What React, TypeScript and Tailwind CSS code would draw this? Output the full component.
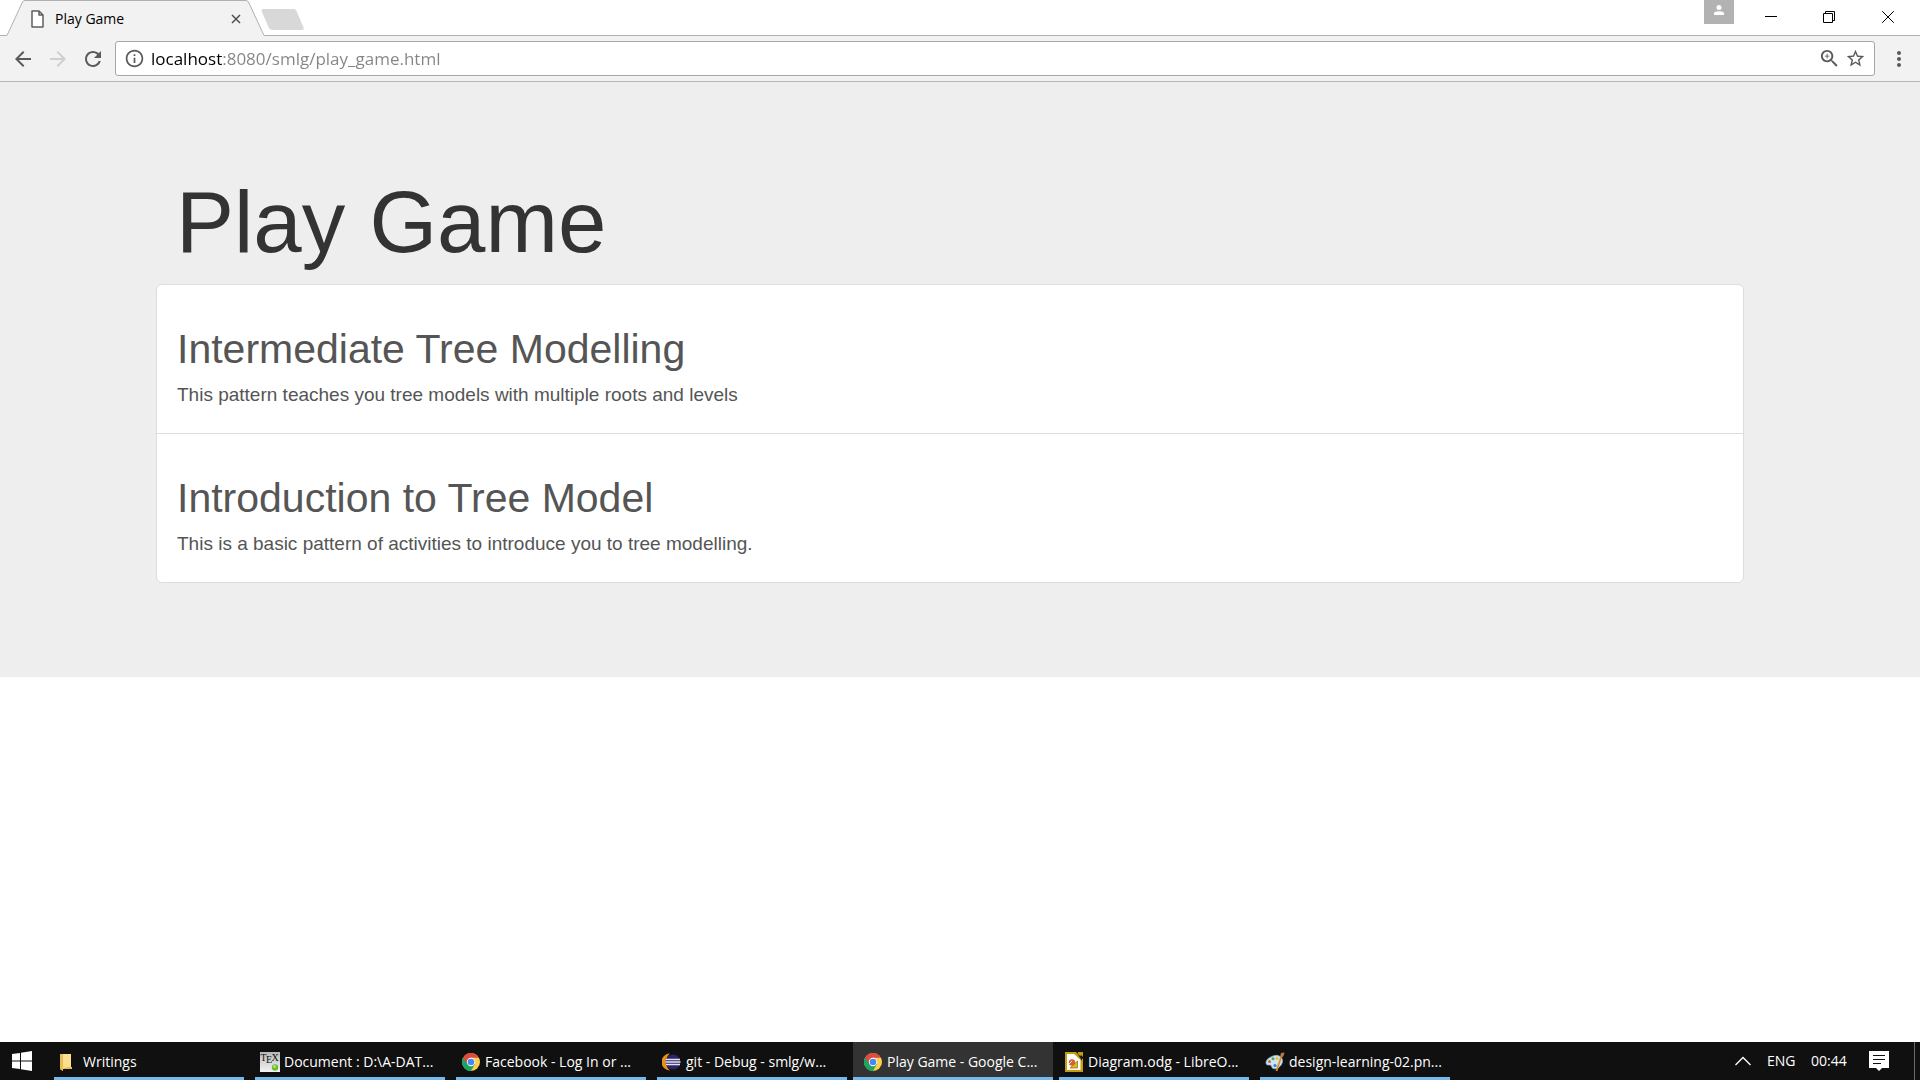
import React from "react";

type IconProps = { d: string; className?: string };

function Glyph({ d, className = "size-[21px]" }: IconProps) {
  return (
    <svg viewBox="0 0 24 24" fill="currentColor" aria-hidden="true" className={`shrink-0 ${className}`}>
      <path d={d} />
    </svg>
  );
}

const ARROW_BACK = "M20 11H7.83l5.59-5.59L12 4l-8 8 8 8 1.41-1.41L7.83 13H20v-2z";
const ARROW_FORWARD = "M4 11h12.17l-5.59-5.59L12 4l8 8-8 8-1.41-1.41L16.17 13H4v-2z";
const RELOAD =
  "M17.65 6.35C16.2 4.9 14.21 4 12 4c-4.42 0-7.99 3.58-7.99 8s3.57 8 7.99 8c3.73 0 6.84-2.55 7.73-6h-2.08c-.82 2.33-3.04 4-5.65 4-3.31 0-6-2.69-6-6s2.69-6 6-6c1.66 0 3.14.69 4.22 1.78L13 11h7V4l-2.35 2.35z";
const INFO =
  "M11 17h2v-6h-2v6zm1-15C6.48 2 2 6.48 2 12s4.48 10 10 10 10-4.48 10-10S17.52 2 12 2zm0 18c-4.41 0-8-3.59-8-8s3.59-8 8-8 8 3.59 8 8-3.59 8-8 8zM11 9h2V7h-2v2z";
const STAR =
  "M22 9.24l-7.19-.62L12 2 9.19 8.63 2 9.24l5.46 4.73L5.82 21 12 17.27 18.18 21l-1.63-7.03L22 9.24zM12 15.4l-3.76 2.27 1-4.28-3.32-2.88 4.38-.38L12 6.1l1.71 4.04 4.38.38-3.32 2.88 1 4.28L12 15.4z";
const ZOOM_IN =
  "M15.5 14h-.79l-.28-.27C15.41 12.59 16 11.11 16 9.5 16 5.91 13.09 3 9.5 3S3 5.91 3 9.5 5.91 16 9.5 16c1.61 0 3.09-.59 4.23-1.57l.27.28v.79l5 4.99L20.49 19l-4.99-5zm-6 0C7.01 14 5 11.99 5 9.5S7.01 5 9.5 5 14 7.01 14 9.5 11.99 14 9.5 14zm2.500-4h-2v2H9v-2H7V9h2V7h1v2h2v1z";
const MORE =
  "M12 8c1.1 0 2-.9 2-2s-.9-2-2-2-2 .9-2 2 .9 2 2 2zm0 2c-1.1 0-2 .9-2 2s.9 2 2 2 2-.9 2-2-.9-2-2-2zm0 6c-1.1 0-2 .9-2 2s.9 2 2 2 2-.9 2-2-.9-2-2-2z";

function TabStrip() {
  return (
    <header className="flex h-9 items-start bg-white">
      <div className="relative h-9 w-[271px] shrink-0">
        <svg viewBox="0 0 271 36" className="absolute inset-0 size-full" aria-hidden="true">
          <path d="M0 35.5H7L22 3Q23 .5 25 .5H246Q248 .5 249 3L264 35.5H271" fill="#f2f2f2" stroke="#b0b0b0" />
          <path d="M8 35.5H263" stroke="#f2f2f2" />
        </svg>
        <div className="relative flex h-[38px] items-center pr-[25px] pl-[31px]">
          <svg viewBox="0 0 13 18" className="h-[18px] w-[13px] shrink-0" fill="#fff" stroke="#5f5f5f" strokeWidth="1.5" strokeLinejoin="round" aria-hidden="true">
            <path d="M1 1H8L12 5V17H1ZM8 1V5H12" />
          </svg>
          <span className="ml-[11px] flex-1 text-sm text-black">Play Game</span>
          <button type="button" aria-label="Close tab" className="flex size-5 items-center justify-center">
            <svg viewBox="0 0 10 10" className="size-[10px]" stroke="#4f4f4f" strokeWidth="1.5" aria-hidden="true">
              <path d="M1 1 9 9M9 1 1 9" />
            </svg>
          </button>
        </div>
      </div>
      <div className="flex h-9 flex-1 items-start justify-between border-b border-[#b0b0b0]">
        <button type="button" aria-label="New tab" className="-ml-[10px] pt-[9px]">
          <svg viewBox="0 0 43 21" className="h-[21px] w-[43px]" aria-hidden="true">
            <path d="M2 0H33Q34.500 0 35.500 2L42.500 18.500Q43 21 41 21H11Q9 21 8 19L.5 2Q0 0 2 0Z" fill="#d8d8d8" />
          </svg>
        </button>
        <div className="flex items-start">
          <button type="button" aria-label="Profile" className="mr-[13px] flex h-6 w-[30px] justify-center bg-[#b2b2b2] pt-[5px]">
            <svg viewBox="0 0 10 10" className="size-[10px]" fill="#fff" aria-hidden="true">
              <circle cx="5" cy="2.500" r="2.500" />
              <path d="M0 10V8.500Q0 6.200 5 6.200T10 8.500V10Z" />
            </svg>
          </button>
          <button type="button" aria-label="Minimize" className="flex h-[34px] w-12 items-center justify-center">
            <svg viewBox="0 0 12 12" className="size-3" aria-hidden="true">
              <path d="M0 5.500H12" stroke="#000" />
            </svg>
          </button>
          <button type="button" aria-label="Restore" className="ml-[10px] flex h-[34px] w-12 items-center justify-center">
            <svg viewBox="0 0 12 12" className="size-3" fill="none" stroke="#000" aria-hidden="true">
              <path d="M.5 2.500H9.500V11.500H.5ZM2.500 2.500V.5H11.500V9.500H9.500" />
            </svg>
          </button>
          <button type="button" aria-label="Close" className="mr-2 ml-[11px] flex h-[34px] w-12 items-center justify-center">
            <svg viewBox="0 0 12 12" className="size-3" stroke="#000" aria-hidden="true">
              <path d="M.2 .2 11.800 11.800M11.800 .2 .2 11.800" />
            </svg>
          </button>
        </div>
      </div>
    </header>
  );
}

function Toolbar() {
  return (
    <nav className="flex h-[46px] items-center border-b border-[#b6b6b6] bg-[#f2f2f2] pl-[11px] text-[#5a5a5a]">
      <button type="button" aria-label="Back">
        <Glyph d={ARROW_BACK} className="size-6" />
      </button>
      <button type="button" aria-label="Forward" disabled className="ml-[11px] text-[#cfcfcf]">
        <Glyph d={ARROW_FORWARD} className="size-6" />
      </button>
      <button type="button" aria-label="Reload" className="ml-[11px]">
        <Glyph d={RELOAD} className="size-6" />
      </button>
      <div className="ml-[10px] flex h-[35px] flex-1 items-center rounded-[3px] border border-[#a6a6a6] bg-white pr-2 pl-2">
        <button type="button" aria-label="View site information">
          <Glyph d={INFO} />
        </button>
        <input
          type="text"
          aria-label="Address"
          defaultValue="localhost:8080/smlg/play_game.html"
          spellCheck={false}
          className="ml-[6px] h-8 min-w-0 flex-1 bg-[linear-gradient(to_right,#000_71px,#848484_71px)] bg-clip-text text-[17px] text-transparent caret-black outline-none"
        />
        <button type="button" aria-label="Zoom">
          <Glyph d={ZOOM_IN} className="size-[23px]" />
        </button>
        <button type="button" aria-label="Bookmark this page" className="ml-1">
          <Glyph d={STAR} />
        </button>
      </div>
      <button type="button" aria-label="Menu" className="mr-[9px] ml-3">
        <Glyph d={MORE} className="size-6" />
      </button>
    </nav>
  );
}

const patterns = [
  {
    title: "Intermediate Tree Modelling",
    text: "This pattern teaches you tree models with multiple roots and levels",
  },
  {
    title: "Introduction to Tree Model",
    text: "This is a basic pattern of activities to introduce you to tree modelling.",
  },
];

function GamePage() {
  return (
    <main className="flex-1 bg-white font-['Liberation_Sans',Arial,sans-serif]">
      <section className="bg-[#eee] pt-[92px] pr-44 pb-[94px] pl-[156px]">
        <h1 className="pl-5 text-[87px] leading-[96px] text-[#333]">Play Game</h1>
        <ul className="mt-[14px] divide-y divide-[#ddd] overflow-hidden rounded-md border border-[#ddd] bg-white">
          {patterns.map((p) => (
            <li key={p.title}>
              <a href="#" className="block px-5 pt-[41px] pb-6 text-[#555]">
                <h2 className="text-[41px] leading-[46px]">{p.title}</h2>
                <p className="mt-[9px] text-[19px] leading-7">{p.text}</p>
              </a>
            </li>
          ))}
        </ul>
      </section>
    </main>
  );
}

function FolderIcon() {
  return (
    <svg viewBox="0 0 20 20" className="size-5" aria-hidden="true">
      <path d="M1 2H9L10 3V16H13V17H4V19L1 17Z" fill="#f5cf6b" />
      <path d="M4 2H12V16H4Z" fill="#fbdf8c" />
      <path d="M1 2H4V19L1 17Z" fill="#e9bd55" />
      <path d="M10 15H13V17H5V16Z" fill="#e9bd55" />
    </svg>
  );
}

function TexIcon() {
  return (
    <svg viewBox="0 0 20 20" className="size-5" aria-hidden="true">
      <defs>
        <linearGradient id="texPage" x1="0" y1="0" x2="0" y2="1">
          <stop offset="0" stopColor="#b8b8b8" />
          <stop offset="1" stopColor="#f4f4f4" />
        </linearGradient>
      </defs>
      <rect width="20" height="20" fill="url(#texPage)" />
      <g fontFamily="Liberation Serif, serif" fontSize="10" fill="#111">
        <text x="0.500" y="9">T</text>
        <text x="6" y="11">E</text>
        <text x="11.500" y="9">X</text>
      </g>
      <circle cx="15" cy="15.500" r="3.200" fill="#6cc030" />
      <circle cx="14.500" cy="14.500" r="1.200" fill="#c4ee95" />
    </svg>
  );
}

function ChromeIcon() {
  return (
    <svg viewBox="0 0 20 20" className="size-5" aria-hidden="true">
      <circle cx="10" cy="10" r="9" fill="#fdd04b" />
      <path d="M10 10 2.200 5.500A9 9 0 0 0 10 19L14 12Z" fill="#1da362" />
      <path d="M2.200 5.500A9 9 0 0 1 17.900 5.800H10L6.200 12Z" fill="#dd4b3e" />
      <circle cx="10" cy="10" r="4.200" fill="#fff" />
      <circle cx="10" cy="10" r="3.300" fill="#4688f4" />
    </svg>
  );
}

function EclipseIcon() {
  return (
    <svg viewBox="0 0 20 20" className="size-5" aria-hidden="true">
      <path d="M8 1.500A8.500 8.500 0 0 0 8 18.500Q4 15 4 10T8 1.500Z" fill="#e8921c" />
      <circle cx="11" cy="10" r="7.500" fill="#2d2463" />
      <path d="M4 7.500H18M3.500 10H18.500M4 12.500H18" stroke="#e4e2f2" strokeWidth="1.400" />
    </svg>
  );
}

function DrawIcon() {
  return (
    <svg viewBox="0 0 20 20" className="size-5" aria-hidden="true">
      <path d="M1 0H12L14 2V0H19V5L17 3L16 5L19 7V20H1Z" fill="#c79b10" />
      <path d="M3 2H10L16.500 8V18H3Z" fill="#fff" />
      <path d="M13 1 18 6V9Z" fill="#222" />
      <circle cx="8" cy="10.500" r="3.200" fill="#d9632a" />
      <path d="M6 16 13.500 9V16Z" fill="#e3b41e" stroke="#8b6a08" strokeWidth=".7" />
      <path d="M5 12 8 9" stroke="#fff" strokeWidth=".8" />
    </svg>
  );
}

function PaintIcon() {
  return (
    <svg viewBox="0 0 20 20" className="size-5" aria-hidden="true">
      <path d="M8 4C13 2 18 5 17.500 9.500S12 18 8 16.500C6 15.500 7 13 5 13S1 13.500 1 10.500 4 5.500 8 4Z" fill="#c9e4f5" stroke="#7fb0d0" strokeWidth=".7" />
      <circle cx="4.500" cy="9.500" r="1.500" fill="#e4573d" />
      <circle cx="8" cy="6.800" r="1.500" fill="#58ae3c" />
      <circle cx="12" cy="6.500" r="1.400" fill="#f1bd2f" />
      <circle cx="10" cy="13.500" r="1.600" fill="#3a7fcf" />
      <path d="M11.500 19 16 5.500" stroke="#e58a26" strokeWidth="1.800" />
      <path d="M15 5 16 1 19.500 .5 18.500 4 16.800 6Z" fill="#b07b4a" />
    </svg>
  );
}

const tasks: { label: string; icon: React.ReactNode; active?: boolean }[] = [
  { label: "Writings", icon: <FolderIcon /> },
  { label: "Document : D:\\A-DAT...", icon: <TexIcon /> },
  { label: "Facebook - Log In or ...", icon: <ChromeIcon /> },
  { label: "git - Debug - smlg/w...", icon: <EclipseIcon /> },
  { label: "Play Game - Google C...", icon: <ChromeIcon />, active: true },
  { label: "Diagram.odg - LibreO...", icon: <DrawIcon /> },
  { label: "design-learning-02.pn...", icon: <PaintIcon /> },
];

function Taskbar() {
  return (
    <footer className="flex h-[38px] items-stretch bg-[#101010] text-sm text-white">
      <button type="button" aria-label="Start" className="flex w-[49px] items-center pl-3">
        <svg viewBox="0 0 20 20" className="size-5" fill="#fff" aria-hidden="true">
          <path d="M0 3 8 1.900V9.500H0ZM9 1.700 20 0V9.500H9ZM0 10.500H8V18.100L0 17ZM9 10.500H20V20L9 18.300Z" />
        </svg>
      </button>
      <div className="flex flex-1 gap-px">
        {tasks.map((t) =>
          t.active ? (
            <button key={t.label} type="button" className="flex w-[200px] items-center gap-1 border-b-[3px] border-[#76b9ed] bg-[#333] pt-1 pl-[10px] whitespace-nowrap">
              {t.icon}
              {t.label}
            </button>
          ) : (
            <button key={t.label} type="button" className="mx-[5px] flex w-[190px] items-center gap-1 border-b-[3px] border-[#76b9ed] pt-1 pl-[5px] whitespace-nowrap">
              {t.icon}
              {t.label}
            </button>
          ),
        )}
      </div>
      <div className="flex items-center">
        <button type="button" aria-label="Show hidden icons" className="mr-4">
          <svg viewBox="0 0 16 10" className="h-[10px] w-4" fill="none" stroke="#fff" strokeWidth="1.300" aria-hidden="true">
            <path d="M.5 9 8 1.500 15.500 9" />
          </svg>
        </button>
        <span className="w-11">ENG</span>
        <time className="w-[58px]">00:44</time>
        <button type="button" aria-label="Notifications" className="mr-[25px]">
          <svg viewBox="0 0 20 20" className="size-5" aria-hidden="true">
            <path d="M0 0H20V17H13L10 20 7 17H0Z" fill="#fff" />
            <path d="M4 4.500H16M4 8.500H16M4 12.500H12" stroke="#101010" />
          </svg>
        </button>
        <button type="button" aria-label="Show desktop" className="h-full w-[6px] border-l border-[#6a6a6a]" />
      </div>
    </footer>
  );
}

export default function App() {
  return (
    <div className="flex min-h-screen flex-col bg-white font-['Open_Sans','Noto_Sans',sans-serif]">
      <TabStrip />
      <Toolbar />
      <GamePage />
      <Taskbar />
    </div>
  );
}
